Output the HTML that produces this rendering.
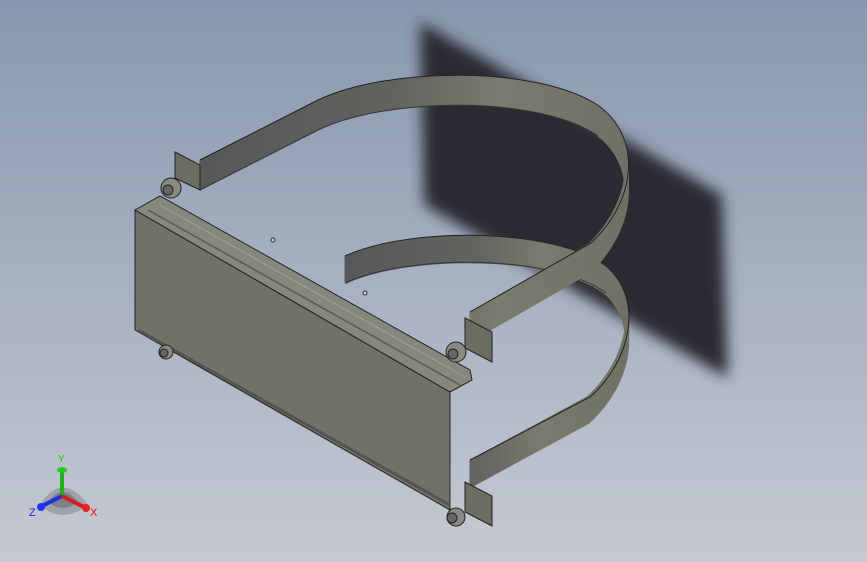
<!DOCTYPE html>
<html><head><style>
html,body{margin:0;padding:0;width:867px;height:562px;overflow:hidden}
body{background:linear-gradient(#8898ae,#a9b3c3 55%,#c6cad2);font-family:"Liberation Sans",sans-serif}
svg{position:absolute;left:0;top:0}
</style></head><body>
<svg width="867" height="562" viewBox="0 0 867 562">
<defs>
<filter id="b" x="-30%" y="-30%" width="160%" height="160%"><feGaussianBlur stdDeviation="7"/></filter>
<linearGradient id="bd" x1="0" x2="1"><stop offset="0" stop-color="#58585a"/><stop offset=".45" stop-color="#62625e"/><stop offset=".7" stop-color="#7a7a6e"/><stop offset="1" stop-color="#707066"/></linearGradient>
<path id="ub" d="M200,162 L318,102 C390,68 540,68 598,108 C640,140 635,200 590,245 L470,314" fill="none" stroke="url(#bd)" stroke-width="4"/>
<path id="lb" d="M345,258 C410,228 555,230 605,268 C642,300 630,360 588,398 L470,462" fill="none" stroke="url(#bd)" stroke-width="4"/>
</defs>
<polygon points="420,22 722,195 728,378 424,205" fill="#2a2c31" filter="url(#b)"/>
<g>
<use href="#lb" y="0"/><use href="#lb" y="2"/><use href="#lb" y="4"/><use href="#lb" y="6"/><use href="#lb" y="8"/><use href="#lb" y="10"/><use href="#lb" y="12"/><use href="#lb" y="14"/><use href="#lb" y="16"/><use href="#lb" y="18"/><use href="#lb" y="20"/><use href="#lb" y="22"/><use href="#lb" y="24"/>
</g>
<path d="M345,256 C410,226 555,228 606,266 C644,298 632,360 590,397 L470,460" fill="none" stroke="#222" stroke-width="1"/>
<path d="M345,283 C410,253 555,255 606,293" fill="none" stroke="#333" stroke-width="1"/>
<g>
<use href="#ub" y="0"/><use href="#ub" y="2"/><use href="#ub" y="4"/><use href="#ub" y="6"/><use href="#ub" y="8"/><use href="#ub" y="10"/><use href="#ub" y="12"/><use href="#ub" y="14"/><use href="#ub" y="16"/><use href="#ub" y="18"/><use href="#ub" y="20"/><use href="#ub" y="22"/><use href="#ub" y="24"/><use href="#ub" y="26"/>
</g>
<path d="M200,160 L318,100 C390,66 540,66 599,106 C642,138 637,200 591,243 L470,312" fill="none" stroke="#222" stroke-width="1"/>
<path d="M200,190 L318,130 C390,96 540,96 598,136" fill="none" stroke="#333" stroke-width="1"/>
<polygon points="175,152 200,165 200,190 175,178" fill="#6c6c62" stroke="#222"/>
<polygon points="465,318 492,332 492,362 465,348" fill="#6c6c62" stroke="#222"/>
<polygon points="465,482 492,496 492,526 465,512" fill="#6c6c62" stroke="#222"/>
<polygon points="135,210 450,392 450,510 135,330" fill="#71716a" stroke="#222"/>
<polygon points="135,210 160,196 470,370 472,380 450,392" fill="#87877d" stroke="#222"/>
<line x1="148" y1="210" x2="460" y2="385" stroke="#5a5a55" stroke-width="1.5"/>
<line x1="160" y1="205" x2="465" y2="377" stroke="#a0a096" stroke-width="1"/>
<line x1="138" y1="330" x2="450" y2="505" stroke="#55554f" stroke-width="3"/>
<circle cx="273" cy="240" r="2" fill="#ccc" stroke="#333"/>
<circle cx="365" cy="293" r="2" fill="#ccc" stroke="#333"/>
<g stroke="#222" fill="#8a8a82">
<circle cx="171" cy="188" r="10"/><circle cx="168" cy="190" r="5" fill="#666"/>
<circle cx="456" cy="352" r="10"/><circle cx="453" cy="354" r="5" fill="#666"/>
<circle cx="456" cy="517" r="9"/><circle cx="452" cy="518" r="5" fill="#666"/>
<circle cx="166" cy="352" r="7"/><circle cx="164" cy="353" r="4" fill="#666"/>
</g>
<path d="M40,505 Q62,470 88,505 Q62,525 40,505Z" fill="#8f939a" opacity=".7"/>
<path d="M48,502 Q62,482 78,502 Q62,514 48,502Z" fill="#6e7278" opacity=".7"/>
<line x1="62" y1="496" x2="62" y2="472" stroke="#1eb31e" stroke-width="4"/>
<ellipse cx="62" cy="470" rx="5" ry="3" fill="#2c2"/>
<line x1="62" y1="496" x2="40" y2="507" stroke="#1d2ee0" stroke-width="4"/>
<circle cx="41" cy="507" r="4" fill="#23f"/>
<line x1="62" y1="496" x2="86" y2="508" stroke="#d51c1c" stroke-width="4"/>
<circle cx="86" cy="508" r="4" fill="#e22"/>
<text x="58" y="462" font-size="10" fill="#1c1">Y</text>
<text x="29" y="516" font-size="11" fill="#22c">Z</text>
<text x="90" y="516" font-size="11" fill="#d11">X</text>
</svg>
</body></html>
